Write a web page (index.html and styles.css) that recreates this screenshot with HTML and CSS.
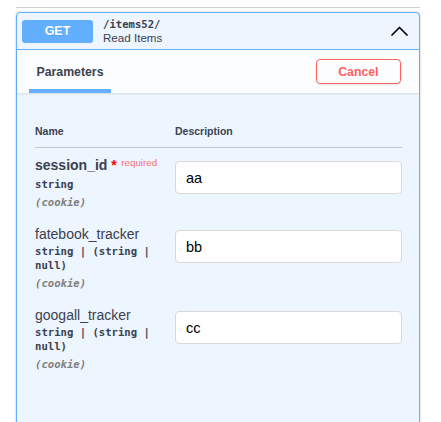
FILE: index.html
```html
<!DOCTYPE html>
<html>
<head>
<meta charset="utf-8">
<link rel="stylesheet" href="styles.css">
</head>
<body>
<div class="wrap">
  <div class="tag-line"></div>
  <div class="opblock">
    <div class="summary">
      <span class="method">GET</span>
      <div class="summary-text">
        <span class="path">/items52/</span>
        <span class="desc">Read Items</span>
      </div>
      <svg class="arrow" width="17" height="10" viewBox="0 0 17 10"><polyline points="1,9 8.5,1.5 16,9" fill="none" stroke="#000" stroke-width="1.7" stroke-linecap="round" stroke-linejoin="round"/></svg>
    </div>
    <div class="section-header">
      <div class="tab-item"><span>Parameters</span></div>
      <button class="btn-cancel">Cancel</button>
    </div>
    <div class="table-container">
      <div class="thead">
        <div class="th">Name</div>
        <div class="th">Description</div>
      </div>
      <div class="prow">
        <div class="pname">
          <div class="name required">session_id<span class="star">&nbsp;*</span><span class="req">required</span></div>
          <div class="type">string</div>
          <div class="in">(cookie)</div>
        </div>
        <div class="pdesc"><input class="field" type="text" value="aa"></div>
      </div>
      <div class="prow">
        <div class="pname">
          <div class="name">fatebook_tracker</div>
          <div class="type">string | (string | null)</div>
          <div class="in">(cookie)</div>
        </div>
        <div class="pdesc"><input class="field" type="text" value="bb"></div>
      </div>
      <div class="prow">
        <div class="pname">
          <div class="name">googall_tracker</div>
          <div class="type">string | (string | null)</div>
          <div class="in">(cookie)</div>
        </div>
        <div class="pdesc"><input class="field" type="text" value="cc"></div>
      </div>
    </div>
  </div>
</div>
</body>
</html>
```

FILE: styles.css
```css
html, body {
  margin: 0;
  padding: 0;
  background: #fff;
  font-family: "Liberation Sans", Arial, sans-serif;
  color: #3b4151;
}
.wrap {
  width: 404px;
  margin-left: 16px;
  padding-top: 7px;
}
.tag-line {
  height: 1px;
  background: #cfd1d5;
}
.opblock {
  margin-top: 4px;
  border: 1px solid #61affe;
  border-radius: 4px;
  background: #edf5fe;
  box-shadow: 0 0 3px rgba(0,0,0,.19);
  min-height: 440px;
}
.summary {
  display: flex;
  align-items: center;
  padding: 4px 5px;
  border-bottom: 1px solid #61affe;
}
.method {
  width: 71px;
  height: 23px;
  line-height: 23px;
  text-align: center;
  background: #61affe;
  color: #fff;
  font-weight: 700;
  font-size: 12.5px;
  border-radius: 3px;
  text-shadow: 0 1px 0 rgba(0,0,0,.1);
}
.summary-text {
  display: flex;
  flex-direction: column;
  margin-left: 10px;
}
.path {
  display: block;
  font-family: "DejaVu Sans Mono", monospace;
  font-weight: 600;
  font-size: 10.6px;
  line-height: 14px;
  color: #3b4151;
}
.desc {
  display: block;
  font-size: 11.6px;
  line-height: 14px;
  color: #3b4151;
}
.arrow {
  margin-left: auto;
  margin-right: 6px;
  display: block;
}
.section-header {
  display: flex;
  align-items: center;
  height: 43px;
  padding: 0 18px 0 12px;
  background: rgba(255,255,255,.8);
  box-shadow: 0 1px 2px rgba(0,0,0,.1);
}
.tab-item {
  align-self: stretch;
  display: flex;
  align-items: center;
  padding: 5px 7.5px 0;
  border-bottom: 4px solid #61affe;
  font-size: 12.3px;
  font-weight: 700;
  color: #3b4151;
}
.btn-cancel {
  margin-left: auto;
  height: 25px;
  padding: 0 21.5px;
  border: 1.75px solid #ff6060;
  border-radius: 4px;
  background: transparent;
  color: #ff6060;
  font-family: "Liberation Sans", Arial, sans-serif;
  font-weight: 700;
  font-size: 12.3px;
  box-shadow: 0 1px 2px rgba(0,0,0,.1);
}
.table-container {
  padding: 17px 17px 17px 18px;
}
.thead {
  display: grid;
  grid-template-columns: 140px 1fr;
  padding: 14px 0 9px;
  border-bottom: 1px solid #c4c7cd;
}
.th {
  font-size: 10.5px;
  line-height: 14px;
  font-weight: 700;
  color: #3b4151;
}
.prow {
  display: grid;
  grid-template-columns: 140px 1fr;
  padding: 8px 0 8px;
}
.name {
  font-size: 14px;
  line-height: 18px;
  color: #3b4151;
  white-space: nowrap;
}
.name.required {
  font-weight: 700;
}
.star {
  color: red;
  font-size: 14px;
}
.req {
  color: rgba(255,0,0,.6);
  font-size: 9.8px;
  font-weight: 400;
  padding-left: 4.5px;
  position: relative;
  top: -4px;
}
.type {
  margin-top: 1px;
  font-family: "DejaVu Sans Mono", monospace;
  font-weight: 600;
  font-size: 10.6px;
  line-height: 14px;
  color: #3b4151;
  padding-right: 6px;
}
.in {
  margin-top: 4px;
  font-family: "DejaVu Sans Mono", monospace;
  font-weight: 600;
  font-style: italic;
  font-size: 10.6px;
  line-height: 14px;
  color: #808080;
}
.field {
  display: block;
  box-sizing: border-box;
  width: 100%;
  height: 33px;
  margin: 5px 0 0;
  padding: 0 10px;
  border: 1px solid #d9d9d9;
  border-radius: 4px;
  background: #fff;
  font-family: "Liberation Sans", Arial, sans-serif;
  font-size: 14.5px;
  color: #000;
  outline: none;
}
```
